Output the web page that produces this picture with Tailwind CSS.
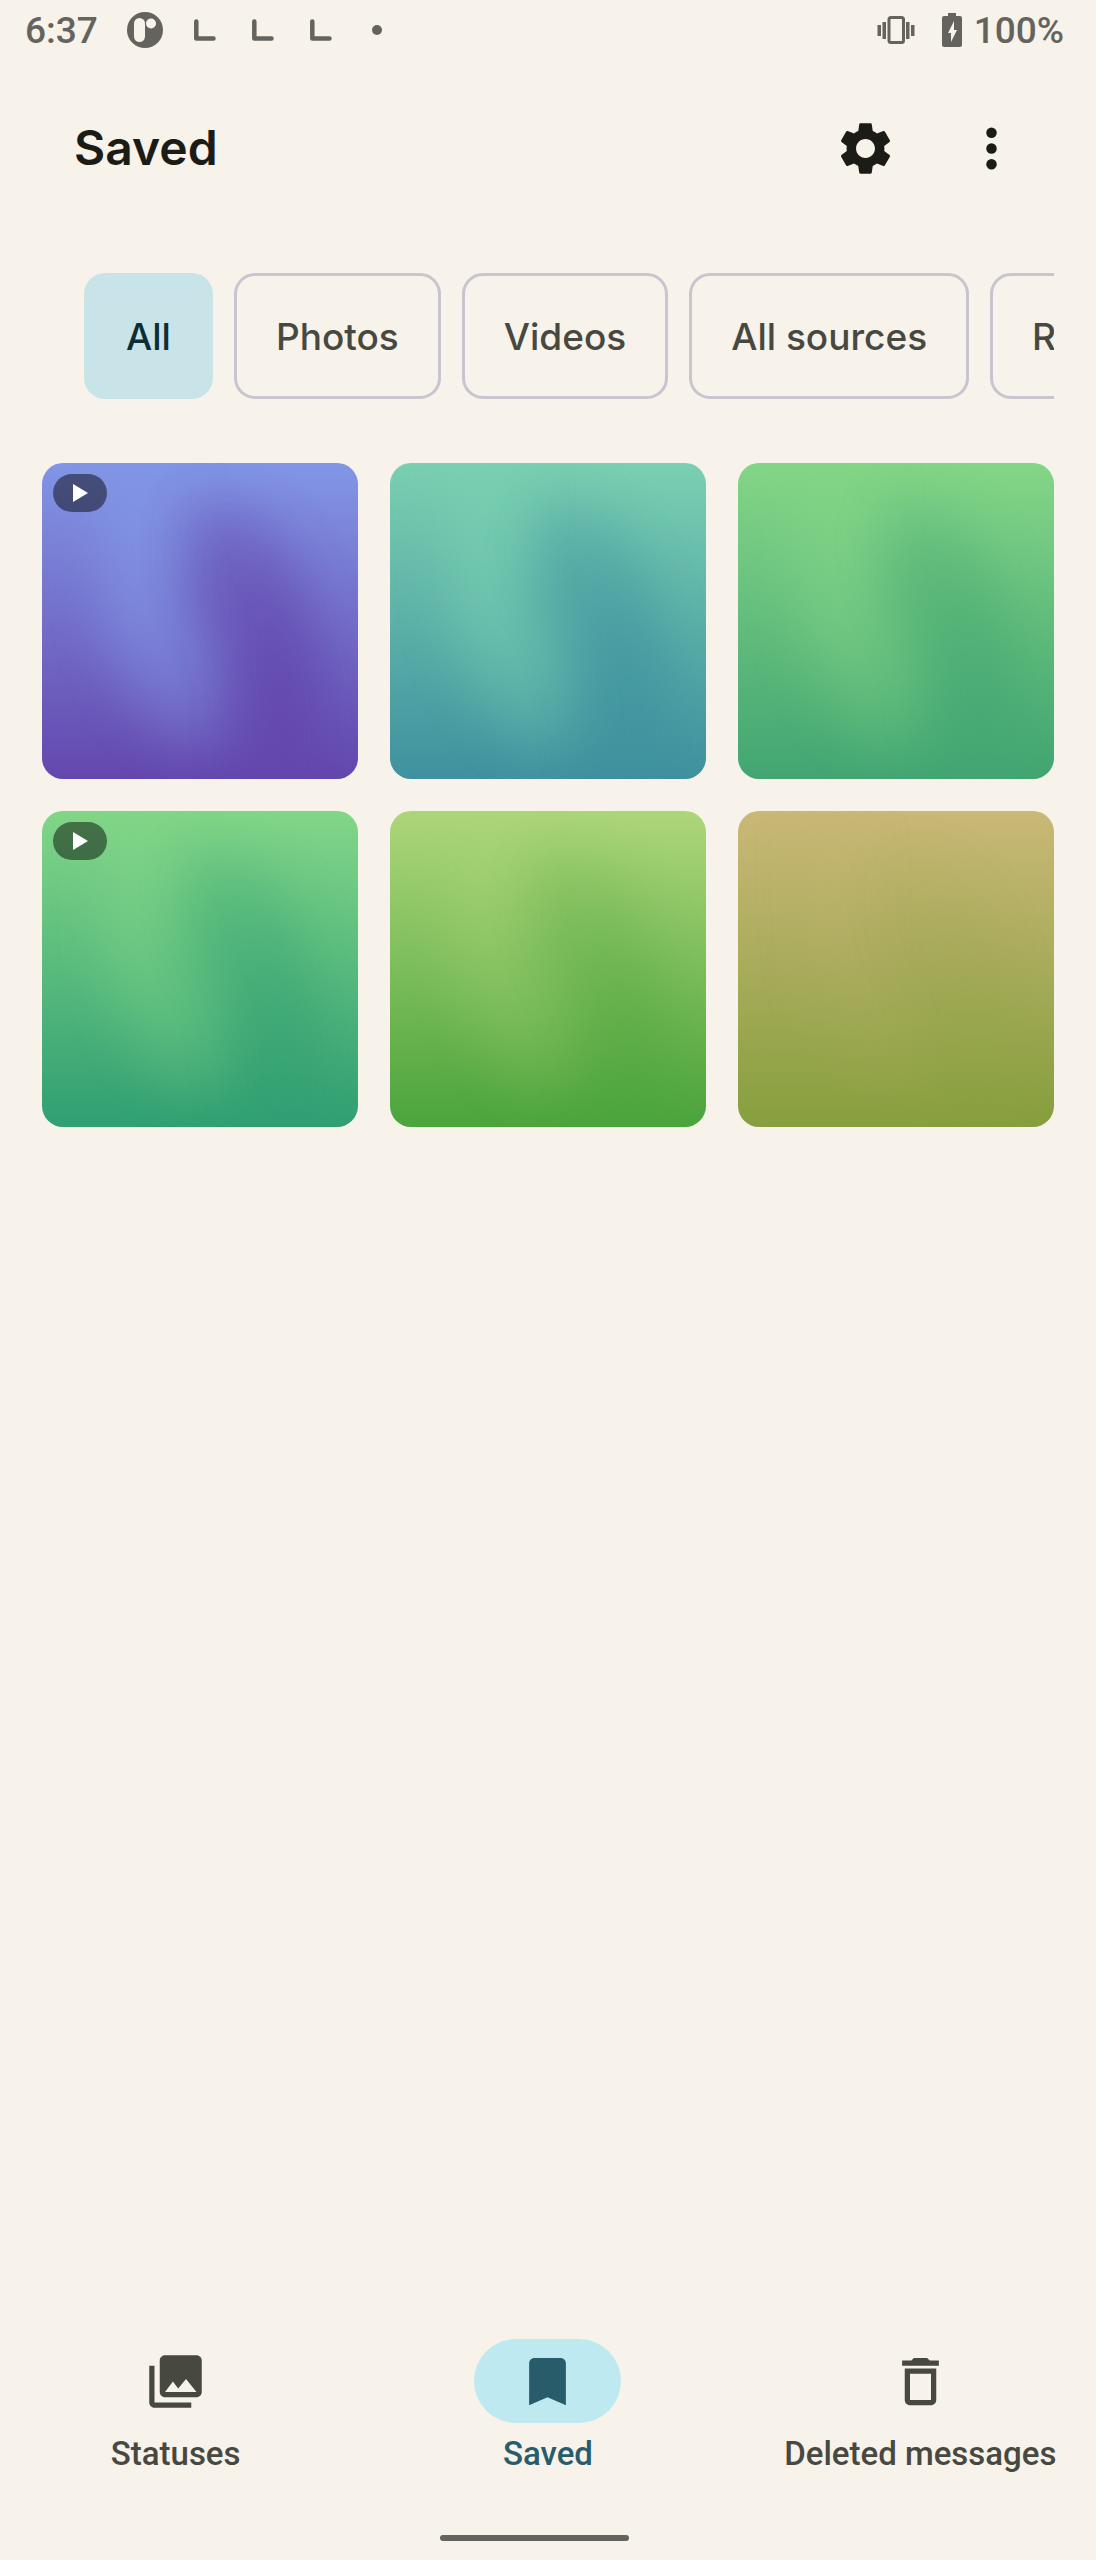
<!DOCTYPE html>
<html lang="en">
  <head>
    <meta charset="UTF-8" />
    <meta name="viewport" content="width=device-width, initial-scale=1.0" />
    <title>Saved</title>
    <script src="https://cdn.jsdelivr.net/npm/@tailwindcss/browser@4"></script>
  </head>
  <body class="min-h-screen flex flex-col bg-[#f7f2ea] font-['Inter',sans-serif] text-[#1b1c16]">
    <!-- status bar -->
    <div class="h-[60px] pl-[25px] pr-8 flex items-center justify-between font-['Roboto',sans-serif] text-[37px] leading-none font-medium text-[#64635e]">
      <div class="flex items-center">
        <span>6:37</span>
        <svg class="ml-[29px] size-9" viewBox="0 0 36 36" fill="currentColor" aria-hidden="true">
          <circle cx="18" cy="18" r="18" />
          <rect x="7" y="6" width="11" height="24" rx="5.5" fill="#f7f2ea" />
          <circle cx="24" cy="11.500" r="5" fill="#f7f2ea" />
        </svg>
        <div class="ml-[31px] flex gap-[33px]" aria-hidden="true">
          <svg class="w-[25px] h-[22px]" viewBox="0 0 25 22" fill="none" stroke="currentColor" stroke-width="4.500" stroke-linecap="round" stroke-linejoin="round"><path d="M2.300 2.500V19.500H19.500" /></svg>
          <svg class="w-[25px] h-[22px]" viewBox="0 0 25 22" fill="none" stroke="currentColor" stroke-width="4.500" stroke-linecap="round" stroke-linejoin="round"><path d="M2.300 2.500V19.500H19.500" /></svg>
          <svg class="w-[25px] h-[22px]" viewBox="0 0 25 22" fill="none" stroke="currentColor" stroke-width="4.500" stroke-linecap="round" stroke-linejoin="round"><path d="M2.300 2.500V19.500H19.500" /></svg>
        </div>
        <span class="ml-[37px] size-[10px] rounded-full bg-current"></span>
      </div>
      <div class="flex items-center">
        <svg class="w-[38px] h-7" viewBox="0 0 38 28" fill="currentColor" aria-hidden="true">
          <rect x="12" y="1.500" width="14.500" height="25" rx="2" fill="none" stroke="currentColor" stroke-width="3" />
          <rect x="5.500" y="6" width="3.500" height="17" />
          <rect x="0.500" y="9" width="3.500" height="11" />
          <rect x="29" y="6" width="3.500" height="17" />
          <rect x="34" y="9" width="3.500" height="11" />
        </svg>
        <svg class="ml-[27px] w-5 h-[34px]" viewBox="0 0 20 34" fill="currentColor" aria-hidden="true">
          <path d="M6 0h8v3h4a2 2 0 0 1 2 2v27a2 2 0 0 1-2 2H2a2 2 0 0 1-2-2V5a2 2 0 0 1 2-2h4z" />
          <path d="M12 8L6 20h3v9l6-12h-3z" fill="#f7f2ea" />
        </svg>
        <span class="ml-3">100%</span>
      </div>
    </div>

    <header class="h-44 pl-[74px] pr-[42px] flex items-center justify-between">
      <h1 class="text-[48px] leading-none font-semibold">Saved</h1>
      <div class="flex">
        <button class="size-[126px] flex items-center justify-center" aria-label="Settings">
          <svg class="size-[63px]" viewBox="0 0 24 24" fill="currentColor">
            <path d="M19.14 12.94c.04-.3.06-.61.06-.94 0-.32-.02-.64-.07-.94l2.030-1.580c.18-.14.23-.41.12-.61l-1.920-3.320c-.12-.22-.37-.29-.59-.22l-2.390.96c-.5-.38-1.030-.7-1.620-.94l-.36-2.540c-.04-.24-.24-.41-.48-.41h-3.840c-.24 0-.43.17-.47.41l-.36 2.540c-.59.24-1.130.57-1.620.94l-2.390-.96c-.22-.08-.47 0-.59.22L2.740 8.870c-.12.21-.08.47.12.61l2.030 1.580c-.05.3-.09.63-.09.94s.02.64.07.94l-2.030 1.580c-.18.14-.23.41-.12.61l1.920 3.320c.12.22.37.29.59.22l2.390-.96c.5.38 1.030.7 1.620.94l.36 2.540c.05.24.24.41.48.41h3.840c.24 0 .44-.17.47-.41l.36-2.540c.59-.24 1.130-.56 1.620-.94l2.390.96c.22.08.47 0 .59-.22l1.920-3.320c.12-.22.07-.47-.12-.61l-2.010-1.580zM12 15.600c-1.980 0-3.600-1.620-3.600-3.600s1.620-3.600 3.600-3.600 3.600 1.620 3.600 3.600-1.620 3.600-3.600 3.600z" />
          </svg>
        </button>
        <button class="size-[126px] flex items-center justify-center" aria-label="More options">
          <svg class="size-[63px]" viewBox="0 0 24 24" fill="currentColor">
            <circle cx="12" cy="6" r="2" />
            <circle cx="12" cy="12" r="2" />
            <circle cx="12" cy="18" r="2" />
          </svg>
        </button>
      </div>
    </header>

    <main class="flex-1 px-[42px] pt-[37px]">
      <!-- filters -->
      <div class="pl-[42px] flex gap-[21px] overflow-hidden text-[37px] leading-none font-medium text-[#47483f]">
        <button class="h-[126px] px-[42px] shrink-0 rounded-[21px] bg-[#c9e4e8] text-[#0b2f35]">All</button>
        <button class="h-[126px] px-[39px] shrink-0 rounded-[21px] border-3 border-[#cac4d0]">Photos</button>
        <button class="h-[126px] px-[39px] shrink-0 rounded-[21px] border-3 border-[#cac4d0]">Videos</button>
        <button class="h-[126px] px-[39px] shrink-0 rounded-[21px] border-3 border-[#cac4d0] whitespace-nowrap">All sources</button>
        <button class="h-[126px] px-[39px] shrink-0 rounded-[21px] border-3 border-[#cac4d0]">Recent</button>
      </div>

      <div id="grid" class="mt-16 grid grid-cols-3 gap-8"></div>
    </main>

    <nav class="grid grid-cols-3 gap-[21px] font-['Roboto',sans-serif] text-[33px] leading-[42px] font-medium text-[#47483f]">
      <a href="#" class="flex flex-col items-center gap-[10px]">
        <span class="w-[147px] h-[84px] flex items-center justify-center">
          <svg class="size-[63px]" viewBox="0 0 24 24" fill="currentColor" aria-hidden="true"><path d="M22 16V4c0-1.100-.9-2-2-2H8c-1.100 0-2 .9-2 2v12c0 1.100.9 2 2 2h12c1.100 0 2-.9 2-2zm-11-4l2.030 2.710L16 11l4 5H8l3-4zM2 6v14c0 1.100.9 2 2 2h14v-2H4V6H2z" /></svg>
        </span>
        <span>Statuses</span>
      </a>
      <a href="#" class="flex flex-col items-center gap-[10px] text-[#285c6a]" aria-current="page">
        <span class="w-[147px] h-[84px] flex items-center justify-center rounded-full bg-[#bee9f0]">
          <svg class="size-[63px]" viewBox="0 0 24 24" fill="currentColor" aria-hidden="true"><path d="M17 3H7c-1.100 0-1.990.9-1.990 2L5 21l7-3 7 3V5c0-1.100-.9-2-2-2z" /></svg>
        </span>
        <span>Saved</span>
      </a>
      <a href="#" class="flex flex-col items-center gap-[10px]">
        <span class="w-[147px] h-[84px] flex items-center justify-center">
          <svg class="size-[63px]" viewBox="0 0 24 24" fill="currentColor" aria-hidden="true"><path d="M6 19c0 1.100.9 2 2 2h8c1.100 0 2-.9 2-2V7H6v12zM8 9h8v10H8V9zm7.500-5l-1-1h-5l-1 1H5v2h14V4z" /></svg>
        </span>
        <span class="whitespace-nowrap">Deleted messages</span>
      </a>
    </nav>
    <div class="pt-[60px] pb-[19px] pr-7 flex justify-center">
      <div class="w-[189px] h-[6px] rounded-full bg-[#64635e]"></div>
    </div>

    <script>
      const items = [
        { top: '#8296e6', bottom: '#6447ad', glow: 0.7, shade: 0.85, video: true },
        { top: '#7ad0b1', bottom: '#3f919f', glow: 0.6, shade: 0.65 },
        { top: '#84d687', bottom: '#42a572', glow: 0.5, shade: 0.55 },
        { top: '#82d688', bottom: '#309f73', glow: 0.45, shade: 0.5, video: true },
        { top: '#add679', bottom: '#4ba43c', glow: 0.3, shade: 0.35 },
        { top: '#cab877', bottom: '#869f3e', glow: 0.1, shade: 0.15 },
      ];

      const badge = `
        <span class="absolute top-[11px] left-[11px] w-[54px] h-[38px] rounded-full bg-black/47 flex items-center justify-center">
          <svg class="w-[15px] h-[18px]" viewBox="0 0 15 18" fill="white"><path d="M0 0L15 9L0 18Z" /></svg>
        </span>`;

      // vertical gradient with a light streak on the left and a dark one on the right
      document.getElementById('grid').innerHTML = items
        .map(
          (item, i) => `
        <a href="#" class="relative aspect-square rounded-[21px] overflow-hidden" aria-label="Saved item ${i + 1}">
          <svg class="size-full" viewBox="0 0 100 100">
            <defs>
              <linearGradient id="bg${i}" x1="0" y1="0" x2="0" y2="1">
                <stop offset="0" stop-color="${item.top}" />
                <stop offset="1" stop-color="${item.bottom}" />
              </linearGradient>
              <linearGradient id="glow${i}" x1="0" y1="0" x2="0" y2="1">
                <stop offset="0.4" stop-color="${item.top}" />
                <stop offset="1" stop-color="${item.top}" stop-opacity="0.3" />
              </linearGradient>
              <linearGradient id="shade${i}" x1="0" y1="0" x2="0" y2="1">
                <stop offset="0" stop-color="${item.bottom}" stop-opacity="0.4" />
                <stop offset="0.6" stop-color="${item.bottom}" />
              </linearGradient>
              <filter id="soft${i}" x="-60%" y="-60%" width="220%" height="220%"><feGaussianBlur stdDeviation="8" /></filter>
            </defs>
            <rect width="100" height="100" fill="url(#bg${i})" />
            <path d="M18 0H42C41 20 40 36 44 48C56 58 60 74 56 92C42 96 28 82 20 54Z" fill="url(#glow${i})" opacity="${item.glow}" filter="url(#soft${i})" />
            <path d="M48 14C60 8 74 16 82 36C88 56 91 82 90 106H66C65 86 63 66 58 54C48 44 44 22 48 14Z" fill="url(#shade${i})" opacity="${item.shade}" filter="url(#soft${i})" />
          </svg>
          ${item.video ? badge : ''}
        </a>`
        )
        .join('');
    </script>
  </body>
</html>
